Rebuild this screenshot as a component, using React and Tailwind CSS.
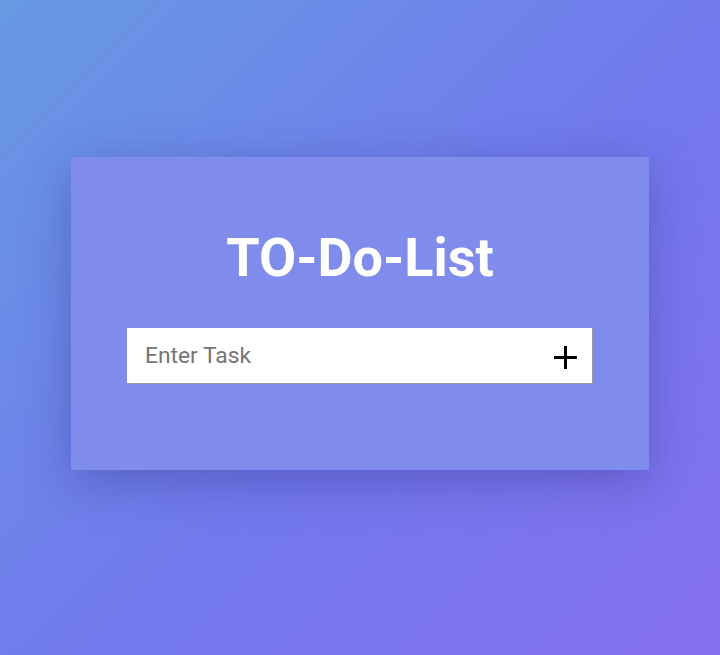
import { useState } from 'react'

export default function App() {
  const [task, setTask] = useState('')

  return (
    <div
      className="w-full h-[655px] flex justify-center pt-[157px] bg-[linear-gradient(135deg,#6799e3_0%,#7279ee_55%,#8670f0_100%)]"
      style={{ fontFamily: 'Roboto, "Liberation Sans", sans-serif' }}
    >
      <div className="w-[578px] h-[313px] bg-[#7f8cec] shadow-[0_12px_45px_rgba(40,40,120,0.35)] flex flex-col items-center pt-[74px] px-14">
        <h1 className="text-[54px] font-bold text-white leading-[54px]">TO-Do-List</h1>
        <div className="mt-[43px] w-[466px] h-[56px] bg-white flex items-center border-b border-r border-[#9a9aa8]">
          <input
            type="text"
            value={task}
            onChange={(e) => setTask(e.target.value)}
            placeholder="Enter Task"
            className="flex-1 h-full pl-[18px] text-[22.8px] text-gray-800 placeholder:text-[#757575] outline-none bg-transparent"
          />
          <button className="w-[23px] h-[23px] mr-[15px] mt-[4px] flex items-center justify-center">
            <svg width="23" height="23" viewBox="0 0 23 23">
              <rect x="0" y="10" width="23" height="3" fill="#000" />
              <rect x="10" y="0" width="3" height="23" fill="#000" />
            </svg>
          </button>
        </div>
      </div>
    </div>
  )
}
